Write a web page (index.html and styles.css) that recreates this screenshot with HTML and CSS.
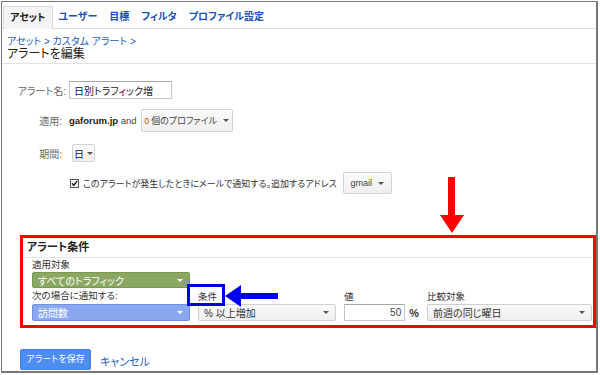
FILE: index.html
```html
<!DOCTYPE html>
<html lang="ja">
<head>
<meta charset="utf-8">
<link rel="stylesheet" href="styles.css">
</head>
<body>
<div class="frame">
  <nav class="tabs">
    <span class="tab active">アセット</span>
    <span class="tab">ユーザー</span>
    <span class="tab">目標</span>
    <span class="tab">フィルタ</span>
    <span class="tab">プロファイル設定</span>
  </nav>
  <header class="head">
    <div class="crumb">アセット &gt; カスタム アラート &gt;</div>
    <h1 class="title">アラートを編集</h1>
  </header>

  <section class="form">
    <div class="row row-name">
      <label class="lbl lbl-name">アラート名:</label>
      <span class="input name-input">日別トラフィック増</span>
    </div>
    <div class="row row-apply">
      <label class="lbl">適用:</label>
      <span class="apply-text"><b>gaforum.jp</b> and</span>
      <span class="btn profiles"><span class="zero">0</span> 個のプロファイル <i class="caret"></i></span>
    </div>
    <div class="row row-period">
      <label class="lbl">期間:</label>
      <span class="btn day">日 <i class="caret"></i></span>
    </div>
    <div class="row row-mail">
      <span class="check"><svg width="9" height="9" viewBox="0 0 9 9"><rect x="0.5" y="0.5" width="8" height="8" fill="#fff" stroke="#555"/><path d="M2 4.2 L3.8 6.3 L7.2 2" fill="none" stroke="#222" stroke-width="1.4"/></svg></span>
      <span class="mail-text">このアラートが発生したときにメールで通知する。追加するアドレス</span>
      <span class="btn gmail">gmail <i class="caret"></i></span>
    </div>

    <div class="cond">
      <div class="cond-head">アラート条件</div>
      <div class="cond-grid">
        <div class="sub c-target">適用対象</div>
        <div class="sel green c-traffic">すべてのトラフィック <i class="caret white"></i></div>
        <div class="sub c-notify">次の場合に通知する:</div>
        <div class="sub c-cond">条件</div>
        <div class="sub c-val">値</div>
        <div class="sub c-cmp">比較対象</div>
        <div class="sel blue c-metric">訪問数 <i class="caret white"></i></div>
        <div class="sel gray c-op">% 以上増加 <i class="caret"></i></div>
        <div class="value c-valbox"><span class="input val-input">50</span><span class="pct">%</span></div>
        <div class="sel gray c-cmpsel">前週の同じ曜日 <i class="caret"></i></div>
      </div>
    </div>

    <div class="actions">
      <span class="save">アラートを保存</span>
      <span class="cancel">キャンセル</span>
    </div>
  </section>

  <span class="hl-box"></span>
  <svg class="arrow-blue" width="56" height="24" viewBox="0 0 56 24"><polygon points="1,12 17,1 17,23" fill="#0000ee"/><rect x="16" y="9" width="38" height="6" fill="#0000ee"/></svg>
  <svg class="arrow-red" width="26" height="58" viewBox="0 0 26 58"><rect x="9" y="0" width="7" height="39" fill="#ff0000"/><polygon points="1,38 25,38 13,56" fill="#ff0000"/></svg>
</div>
</body>
</html>
```

FILE: styles.css
```css
* { box-sizing: border-box; }
body {
  margin: 0;
  background: #fff;
  font-family: "Liberation Sans", "Noto Sans CJK JP", sans-serif;
  font-feature-settings: "palt";
  color: #333;
  font-size: 10px;
}
.frame {
  position: relative;
  margin: 1px 0 0 1px;
  width: 597px;
  height: 372px;
  border: 1px solid #777;
  border-right-width: 2px;
  border-bottom-width: 2px;
  overflow: hidden;
}
.tabs {
  display: flex;
  align-items: flex-end;
  height: 27px;
  padding-left: 1px;
  border-bottom: 1px solid #dedede;
}
.tab {
  height: 22px;
  line-height: 22px;
  padding: 0 6px;
  font-size: 10px;
  font-weight: bold;
  color: #2050b0;
}
.tab.active {
  color: #222;
  background: #f4f4f4;
  border: 1px solid #dadada;
  border-bottom: none;
  height: 23px;
  margin-bottom: -1px;
  padding: 0 6px;
}
.head {
  padding: 7px 0 2px 5px;
  border-bottom: 1px solid #e2e2e2;
}
.crumb {
  font-size: 10px;
  line-height: 12px;
  color: #2a5db0;
}
.title {
  margin: 0;
  font-size: 12px;
  font-weight: normal;
  line-height: 13px;
  color: #222;
}
.form { padding-top: 17px; }
.row {
  display: flex;
  align-items: center;
}
.lbl {
  width: 60px;
  text-align: right;
  color: #666;
  font-size: 10px;
}
.row-name { height: 18px; }
.lbl-name { width: 64px; }
.input {
  display: inline-flex;
  align-items: center;
  height: 18px;
  border: 1px solid #c4c4c4;
  border-top-color: #a8a8a8;
  background: #fff;
  color: #222;
  font-size: 10px;
}
.name-input { margin-left: 3px; width: 103px; padding-left: 4px; }
.row-apply { height: 23px; margin-top: 10px; }
.apply-text { margin-left: 7px; font-size: 9.5px; color: #444; }
.apply-text b { color: #222; }
.btn {
  display: inline-flex;
  align-items: center;
  justify-content: center;
  gap: 6px;
  background: linear-gradient(#fafafa, #efefef);
  border: 1px solid #d3d3d3;
  border-radius: 2px;
  color: #444;
  font-size: 9px;
}
.profiles { margin-left: 4px; width: 92px; height: 23px; }
.zero { color: #c05a00; margin-right: -4px; }
.row-period { height: 18px; margin-top: 12px; }
.day { margin-left: 10px; width: 23px; height: 18px; font-size: 10px; gap: 3px; color: #222; }
.row-mail { height: 22px; margin-top: 10px; padding-left: 68px; }
.check { display: inline-flex; width: 9px; height: 9px; }
.mail-text { margin-left: 4px; font-size: 9px; color: #333; }
.gmail { margin-left: 6px; width: 49px; height: 22px; }
.caret {
  display: inline-block;
  width: 0;
  height: 0;
  border-left: 3px solid transparent;
  border-right: 3px solid transparent;
  border-top: 3px solid #555;
}
.caret.white { border-top-color: #fff; }

.cond {
  margin: 41px 0 0 18px;
  width: 576px;
  height: 93px;
  border: 3px solid #ff0000;
}
.cond-head {
  height: 20px;
  line-height: 19px;
  padding-left: 4px;
  font-size: 11px;
  font-weight: bold;
  color: #222;
  border-bottom: 1px solid #e6e6e6;
}
.cond-grid {
  display: grid;
  grid-template-columns: 158px 138px 75px 165px;
  grid-template-rows: 14px 16px 16px 17px;
  column-gap: 8px;
  padding-left: 9px;
}
.sub {
  font-size: 9.5px;
  color: #333;
  line-height: 14px;
}
.c-target { grid-column: 1; grid-row: 1; }
.c-traffic { grid-column: 1; grid-row: 2; }
.c-notify { grid-column: 1; grid-row: 3; line-height: 16px; }
.c-cond { grid-column: 2; grid-row: 3; line-height: 17px; }
.c-val { grid-column: 3; grid-row: 3; line-height: 17px; }
.c-cmp { grid-column: 4; grid-row: 3; line-height: 17px; }
.c-metric { grid-column: 1; grid-row: 4; }
.c-op { grid-column: 2; grid-row: 4; }
.c-valbox { grid-column: 3; grid-row: 4; }
.c-cmpsel { grid-column: 4; grid-row: 4; }
.sel {
  display: flex;
  align-items: center;
  justify-content: space-between;
  padding: 0 6px 0 5px;
  border-radius: 2px;
  font-size: 10px;
}
.green { background: #8ba862; border: 1px solid #7b9853; color: #fff; }
.blue { background: #8aa8ef; border: 1px solid #7090e0; color: #fff; height: 17px; }
.gray {
  background: linear-gradient(#fafafa, #eeeeee);
  border: 1px solid #cfcfcf;
  color: #333;
  height: 17px;
}
.value { display: flex; align-items: center; gap: 4px; }
.val-input { width: 63px; height: 17px; justify-content: flex-end; padding-right: 3px; color: #444; }
.pct { font-size: 11px; font-weight: bold; color: #333; }

.actions {
  display: flex;
  align-items: center;
  margin-top: 21px;
  padding-left: 18px;
}
.save {
  width: 71px;
  height: 21px;
  line-height: 19px;
  text-align: center;
  background: #4d8cf0;
  border: 1px solid #3f7fe6;
  border-radius: 2px;
  color: #fff;
  font-size: 9px;
}
.cancel { margin-left: 9px; font-size: 11px; color: #2a5db0; padding-top: 2px; }

.hl-box {
  position: absolute;
  left: 185px;
  top: 282px;
  width: 38px;
  height: 22px;
  border: 3px solid #0000dd;
}
.arrow-blue { position: absolute; left: 222px; top: 282px; }
.arrow-red { position: absolute; left: 437px; top: 175px; }
```
